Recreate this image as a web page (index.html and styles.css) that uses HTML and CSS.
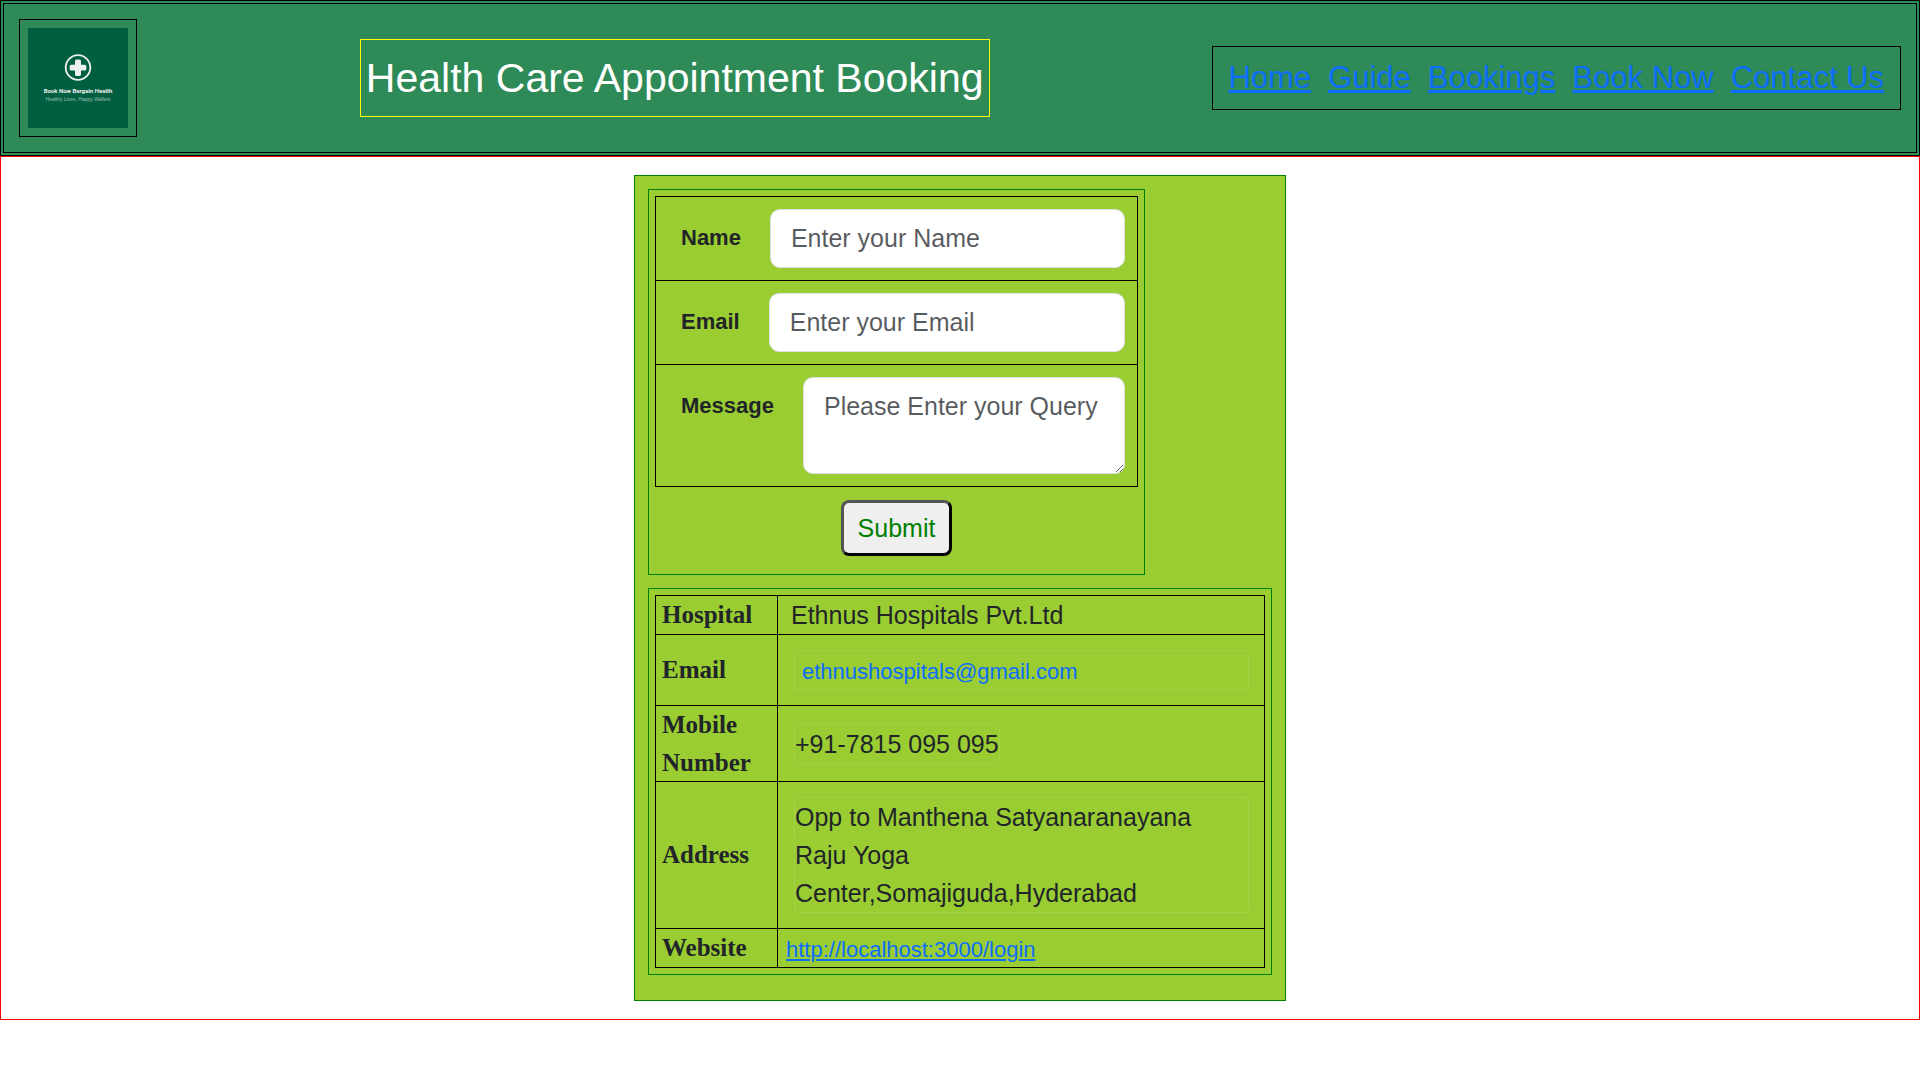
FILE: index.html
```html
<!DOCTYPE html>
<html lang="en">
<head>
<meta charset="utf-8">
<meta name="viewport" content="width=device-width, initial-scale=1">
<title>Health Care Appointment Booking</title>
<link rel="stylesheet" href="styles.css">
</head>
<body>
<header class="site-header">
  <div class="logo">
    <svg class="logo-image" viewBox="0 0 100 100" role="img" aria-label="Book Now Bargain Health">
      <rect width="100" height="100" fill="#005f40"/>
      <circle cx="50" cy="39.5" r="12.3" fill="none" stroke="#eef0ee" stroke-width="1.8"/>
      <path d="M48.500 31.500h3q1.500 0 1.500 1.500v3.700h3.800q1.500 0 1.500 1.500v2.800q0 1.500-1.500 1.500H53v4q0 1.500-1.500 1.500h-3q-1.500 0-1.500-1.500v-4h-3.800q-1.500 0-1.500-1.500v-2.800q0-1.500 1.500-1.500H47V33q0-1.500 1.500-1.500z" fill="#eef0ee"/>
      <text class="logo-name" x="50" y="65">Book Now Bargain Health</text>
      <text class="logo-slogan" x="50" y="73">Healthy Lives, Happy Wallets</text>
    </svg>
  </div>
  <h1 class="site-title">Health Care Appointment Booking</h1>
  <nav class="site-nav">
    <a href="#home">Home</a>
    <a href="#guide">Guide</a>
    <a href="#bookings">Bookings</a>
    <a href="#book">Book Now</a>
    <a href="#contact">Contact Us</a>
  </nav>
</header>
<main class="page">
  <section class="contact-card">
    <form class="contact-form">
      <div class="fields">
        <div class="field">
          <label for="name">Name</label>
          <input class="control" id="name" type="text" placeholder="Enter your Name">
        </div>
        <div class="field">
          <label for="email">Email</label>
          <input class="control" id="email" type="email" placeholder="Enter your Email">
        </div>
        <div class="field">
          <label for="message">Message</label>
          <textarea class="control control-area" id="message" placeholder="Please Enter your Query"></textarea>
        </div>
      </div>
      <button class="submit" type="submit">Submit</button>
    </form>
    <div class="details">
      <table class="details-table">
        <tr>
          <th scope="row">Hospital</th>
          <td class="plain">Ethnus Hospitals Pvt.Ltd</td>
        </tr>
        <tr>
          <th scope="row">Email</th>
          <td><div class="box box-link"><a class="mail" href="mailto:ethnushospitals@gmail.com">ethnushospitals@gmail.com</a></div></td>
        </tr>
        <tr>
          <th scope="row">Mobile Number</th>
          <td><div class="box box-fit">+91-7815 095 095</div></td>
        </tr>
        <tr>
          <th scope="row">Address</th>
          <td><div class="box">Opp to Manthena Satyanaranayana<br>Raju Yoga<br>Center,Somajiguda,Hyderabad</div></td>
        </tr>
        <tr>
          <th scope="row">Website</th>
          <td class="site"><a href="http://localhost:3000/login">http://localhost:3000/login</a></td>
        </tr>
      </table>
    </div>
  </section>
</main>
</body>
</html>
```
FILE: styles.css
```css
* {
  box-sizing: border-box;
}

body {
  margin: 0;
  background: #fff;
  color: #212529;
  font-family: "Liberation Sans", Arial, sans-serif;
  font-size: 25px;
  line-height: 38px;
}

a {
  color: #0d6efd;
}

/* Header */
.site-header {
  display: flex;
  align-items: center;
  justify-content: space-between;
  padding: 15px;
  border: 4px double #000;
  background: #2e8b57;
}

.logo {
  padding: 8px;
  margin-right: 15px;
  border: 1px solid #000;
}

.logo-image {
  display: block;
  width: 100px;
  height: 100px;
}

.logo-name,
.logo-slogan {
  fill: #eef0ee;
  text-anchor: middle;
}

.logo-name {
  font: bold 6px Roboto, sans-serif;
}

.logo-slogan {
  font: 5px "Liberation Sans", sans-serif;
  opacity: 0.6;
}

.site-title {
  margin: 0;
  padding: 8px 5px;
  border: 1px solid #ff0;
  color: #fff;
  font-size: 41px;
  font-weight: 400;
  line-height: 60px;
}

.site-nav {
  display: flex;
  gap: 17px;
  margin-left: 15px;
  padding: 8px 16px 8px 15px;
  border: 1px solid #000;
  font-size: 31px;
  line-height: 46px;
}

/* Contact card */
.page {
  padding: 18px;
  border: 1px solid #f00;
}

.contact-card {
  max-width: 652px;
  margin: 0 auto;
  padding: 13px 13px 25px;
  border: 1px solid #008000;
  background: #9acd32;
}

.contact-form {
  max-width: 497px;
  margin-bottom: 13px;
  padding: 6px;
  border: 1px solid #008000;
}

.fields {
  border: 1px solid #000;
}

.field {
  display: flex;
  align-items: flex-start;
  gap: 29px;
  padding: 12px 12px 12px 25px;
}

.field + .field {
  border-top: 1px solid #000;
}

.field label {
  padding-top: 12px;
  font-size: 22px;
  font-weight: 700;
  line-height: 33px;
}

.control {
  flex: 1;
  min-width: 0;
  padding: 10px 20px;
  border: 1px solid #dee2e6;
  border-radius: 10px;
  background: #fff;
  color: #212529;
  font: inherit;
  line-height: 37px;
}

input.control {
  height: 59px;
}

.control::placeholder {
  color: rgba(33, 37, 41, 0.75);
  opacity: 1;
}

.control-area {
  height: 97px;
  resize: vertical;
}

.submit {
  display: block;
  margin: 13px auto 12px;
  padding: 6px 14px;
  border: 3px outset #000;
  border-radius: 8px;
  background: #efefef;
  color: #008000;
  font: inherit;
  line-height: 38px;
}

/* Hospital details */
.details {
  padding: 6px;
  border: 1px solid #008000;
}

.details-table {
  width: 100%;
  border-collapse: collapse;
}

.details-table th,
.details-table td {
  padding: 0;
  border: 1px solid #000;
  text-align: left;
}

.details-table th {
  width: 122px;
  padding: 0 6px;
  font-family: "Liberation Serif", "Times New Roman", serif;
  line-height: 1.5;
}

.details-table .plain {
  padding: 0 13px;
}

.details-table .site {
  padding: 0 8px;
}

.site a,
.mail {
  font-size: 22px;
  line-height: 33px;
}

.mail {
  text-decoration: none;
}

.box {
  margin: 15px 15px 15px 16px;
  border: 1px solid rgba(255, 255, 255, 0.1);
  border-radius: 4px;
}

.box-link {
  padding: 0 7px;
}

.box-fit {
  width: fit-content;
  margin-top: 0;
  margin-bottom: 0;
}
```
